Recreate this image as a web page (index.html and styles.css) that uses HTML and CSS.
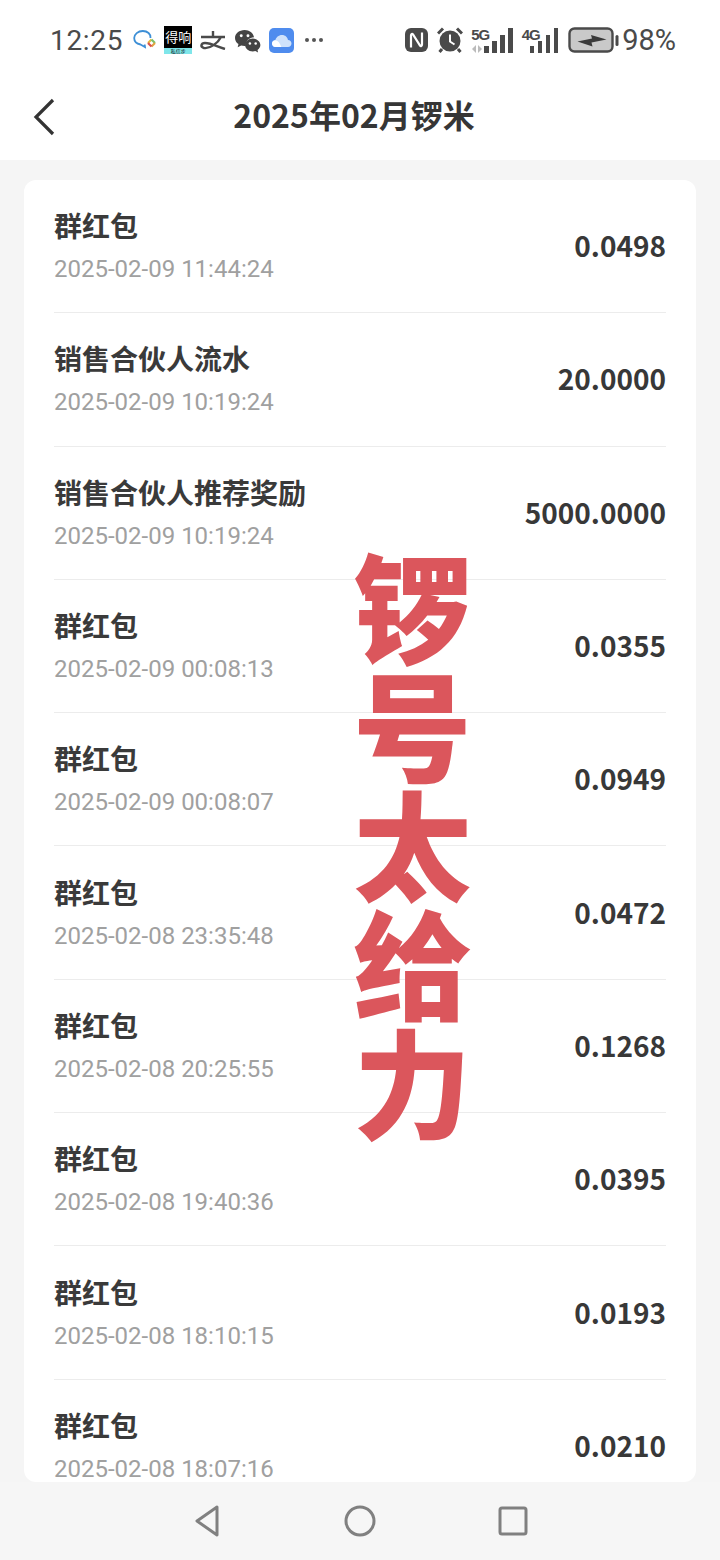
FILE: index.html

```html
<!DOCTYPE html>
<html lang="zh">
<head>
  <meta charset="utf-8">
  <title>2025年02月锣米</title>
  <link rel="stylesheet" href="styles.css">
</head>
<body>
<div class="page">

  <div class="status">
    <span class="clock">12:25</span>
    <div class="app-icons">
      <svg class="ic-chat" viewBox="0 0 23 20" width="23" height="20">
        <path d="M17.500 8C18 4 14.500 1 9.800 1 5 1 1.200 4.200 1.200 8c0 3.300 2.800 5.800 6.300 6.500l4.500 2.500-.3-2.500" fill="none" stroke="#3d8fd6" stroke-width="1.800"/>
        <path d="M15 13l3.500-3.500" stroke="#e8b93a" stroke-width="2.200"/>
        <path d="M18.500 9.500L22 13" stroke="#7cc06a" stroke-width="2.200"/>
        <path d="M22 13l-3.500 3.500" stroke="#e2a13f" stroke-width="2.200"/>
        <path d="M18.500 16.500L15 13" stroke="#d9534f" stroke-width="2.200"/>
      </svg>
      <span class="ic-deyin"><b>得响</b><i>私信步</i></span>
      <svg viewBox="0 0 26 19" width="26" height="19">
        <path d="M13 0v6M1 6h24M21 6c-3 6-11 12-17 11-4-1-3-5 1-5 6 0 13 4 20 6" fill="none" stroke="#4a4a4a" stroke-width="2.400"/>
      </svg>
      <svg viewBox="0 0 28 26" width="27" height="25">
        <path d="M11 2C5.500 2 1 5.700 1 10.300c0 2.600 1.400 4.900 3.600 6.400L3.800 20l3.600-1.800c1.100 .3 2.300 .4 3.600 .4 .4 0 .8 0 1.200 0C12 12.500 16 10 20.800 9.500 20 5.200 16 2 11 2z" fill="#444"/>
        <path d="M19.500 11c-4.500 0-8 3-8 6.700s3.500 6.700 8 6.700c.9 0 1.800-.1 2.700-.4l2.800 1.500-.6-2.600c1.700-1.200 3-3 3-5.200 0-3.700-3.500-6.700-7.900-6.700z" fill="#444"/>
        <circle cx="7.500" cy="8" r="1.500" fill="#fff"/><circle cx="14.500" cy="8" r="1.500" fill="#fff"/>
        <circle cx="16.500" cy="16" r="1.300" fill="#fff"/><circle cx="22.500" cy="16" r="1.300" fill="#fff"/>
      </svg>
      <svg viewBox="0 0 25 25" width="25" height="25">
        <rect width="25" height="25" rx="5" fill="#4f8cee"/>
        <path d="M6.500 19C4 19 3 17 3 15.500S4.300 12.300 6.300 12.300C7 9.500 9.500 7 13 7c3.300 0 5.500 2.300 6 5 2 .2 3.500 1.600 3.500 3.500S21 19 19 19z" fill="#cfe2fb"/>
        <path d="M6.500 19C4 19 3 17 3 15.500S4.300 12.300 6.300 12.300c2.500 0 4.500 2.700 6 6.700z" fill="#fff"/>
      </svg>
      <svg class="ic-dots" viewBox="0 0 20 6" width="20" height="6"><circle cx="3" cy="3" r="2" fill="#555"/><circle cx="10" cy="3" r="2" fill="#555"/><circle cx="17" cy="3" r="2" fill="#555"/></svg>
    </div>
    <div class="sys-icons">
      <svg viewBox="0 0 23 24" width="23" height="24">
        <rect width="23" height="24" rx="6" fill="#4a4a4a"/>
        <path d="M6 19.500V7.500c0-1.500 1.200-2 2-1l7 11c.8 1 2 .5 2-1V4.500" fill="none" stroke="#fff" stroke-width="2.200"/>
      </svg>
      <svg class="ic-alarm" viewBox="0 0 26 26" width="26" height="26">
        <circle cx="13" cy="14" r="10.500" fill="#4a4a4a"/>
        <path d="M13 7.500V14.500l4.500 3" fill="none" stroke="#fff" stroke-width="2"/>
        <path d="M1 6.500L6 1.500M25 6.500L20 1.500M5 22l-2.500 3M21 22l2.500 3" stroke="#4a4a4a" stroke-width="3"/>
      </svg>
      <span class="signal">
        <span class="net"><b>5G</b><svg viewBox="0 0 12 8" width="12" height="8"><path d="M5 0v8L1 4zM7 0v8l4-4z" fill="#bbb"/></svg></span>
        <span class="bars"><i class="b1"></i><i class="b2"></i><i class="b3"></i><i class="b4"></i></span>
      </span>
      <span class="signal signal-4g">
        <span class="net"><b>4G</b></span>
        <span class="bars"><i class="b1"></i><i class="b2"></i><i class="b3"></i><i class="b4"></i></span>
      </span>
      <svg class="ic-batt" viewBox="0 0 52 26" width="52" height="26">
        <rect x="1.500" y="1.500" width="43" height="23" rx="5" fill="#c9c9c9" stroke="#4a4a4a" stroke-width="2.400"/>
        <path d="M9.500 14.500L24 11.500 23 8 38.500 12.500 23.500 15.500 24.500 19.500z" fill="#3a3a3a"/>
        <rect x="47.500" y="8" width="3" height="11" rx="1.500" fill="#4a4a4a"/>
      </svg>
      <span class="pct">98%</span>
    </div>
  </div>

  <div class="topbar">
    <svg class="back" viewBox="0 0 24 38" width="24" height="38"><path d="M21 2L4 19l17 17" fill="none" stroke="#333" stroke-width="3.200"/></svg>
    <h1>2025年02月锣米</h1>
  </div>

  <div class="content">
    <div class="card">
      <div class="row">
        <div><div class="name">群红包</div><div class="time">2025-02-09 11:44:24</div></div>
        <div class="amount">0.0498</div>
      </div>
      <div class="row">
        <div><div class="name">销售合伙人流水</div><div class="time">2025-02-09 10:19:24</div></div>
        <div class="amount">20.0000</div>
      </div>
      <div class="row">
        <div><div class="name">销售合伙人推荐奖励</div><div class="time">2025-02-09 10:19:24</div></div>
        <div class="amount">5000.0000</div>
      </div>
      <div class="row">
        <div><div class="name">群红包</div><div class="time">2025-02-09 00:08:13</div></div>
        <div class="amount">0.0355</div>
      </div>
      <div class="row">
        <div><div class="name">群红包</div><div class="time">2025-02-09 00:08:07</div></div>
        <div class="amount">0.0949</div>
      </div>
      <div class="row">
        <div><div class="name">群红包</div><div class="time">2025-02-08 23:35:48</div></div>
        <div class="amount">0.0472</div>
      </div>
      <div class="row">
        <div><div class="name">群红包</div><div class="time">2025-02-08 20:25:55</div></div>
        <div class="amount">0.1268</div>
      </div>
      <div class="row">
        <div><div class="name">群红包</div><div class="time">2025-02-08 19:40:36</div></div>
        <div class="amount">0.0395</div>
      </div>
      <div class="row">
        <div><div class="name">群红包</div><div class="time">2025-02-08 18:10:15</div></div>
        <div class="amount">0.0193</div>
      </div>
      <div class="row">
        <div><div class="name">群红包</div><div class="time">2025-02-08 18:07:16</div></div>
        <div class="amount">0.0210</div>
      </div>
    </div>
  </div>

  <div class="navbar">
    <svg viewBox="0 0 30 34" width="30" height="34"><path d="M25 3L5 17l20 14z" fill="none" stroke="#808080" stroke-width="3" stroke-linejoin="round"/></svg>
    <svg viewBox="0 0 32 32" width="32" height="32"><circle cx="16" cy="16" r="14" fill="none" stroke="#808080" stroke-width="3"/></svg>
    <svg viewBox="0 0 30 30" width="30" height="30"><rect x="2" y="2" width="26" height="26" rx="2" fill="none" stroke="#808080" stroke-width="3"/></svg>
  </div>

  <!-- sticker over the list -->
  <div class="sticker">锣号太给力</div>

</div>
</body>
</html>
```

FILE: styles.css

```css
* {
    box-sizing: border-box;
}

body {
    margin: 0;
    font-family: "Noto Sans CJK SC", "Noto Sans", sans-serif;
    color: #333;
}

.page {
    position: relative;
    width: 720px;
    height: 1560px;
    display: flex;
    flex-direction: column;
    overflow: hidden;
    background: #f5f5f5;
}

/* status bar */
.status {
    height: 80px;
    flex: none;
    padding: 0 44px 0 50px;
    display: flex;
    align-items: center;
    background: #fff;
    color: #4a4a4a;
}

.clock {
    font-family: Roboto, sans-serif;
    font-size: 28px;
    letter-spacing: 0.7px;
}

.app-icons {
    display: flex;
    align-items: center;
    gap: 8px;
    margin-left: 10px;
}

.ic-deyin {
    width: 28px;
    height: 28px;
    display: flex;
    flex-direction: column;
    align-items: center;
    background: #000;
    overflow: hidden;
}

.ic-deyin b {
    height: 22px;
    font-size: 13px;
    line-height: 22px;
    font-weight: 400;
    color: #fff;
}

.ic-deyin i {
    width: 100%;
    height: 6px;
    font-size: 5px;
    line-height: 6px;
    font-style: normal;
    text-align: center;
    color: #111;
    background: #7fe6ea;
}

.ic-dots {
    margin-left: 2px;
}

.sys-icons {
    display: flex;
    align-items: center;
    margin-left: auto;
}

.ic-alarm {
    margin-left: 9px;
}

.signal {
    display: flex;
    align-items: flex-end;
    height: 26px;
    margin-left: 8px;
}

.signal-4g {
    margin-left: 9px;
}

.signal-4g .bars {
    margin-left: -10px;
}

.net {
    display: flex;
    flex-direction: column;
    width: 18px;
    height: 26px;
    font-family: "Liberation Sans", sans-serif;
}

.net b {
    font-size: 15px;
    line-height: 15px;
    letter-spacing: -1px;
    color: #4a4a4a;
}

.net svg {
    margin-top: 3px;
}

.bars {
    display: flex;
    align-items: flex-end;
    gap: 3.5px;
    margin-left: -5px;
}

.bars i {
    display: block;
    width: 4.5px;
    background: #4a4a4a;
}

.bars .b1 { height: 7px; }
.bars .b2 { height: 12px; }
.bars .b3 { height: 18px; }
.bars .b4 { height: 25px; }

.ic-batt {
    margin-left: 10px;
}

.pct {
    font-family: Roboto, sans-serif;
    font-size: 29px;
    margin-left: 2px;
}

/* title bar */
.topbar {
    height: 80px;
    flex: none;
    position: relative;
    display: flex;
    justify-content: center;
    padding-right: 12px;
    background: #fff;
}

.topbar h1 {
    margin: 0;
    font-size: 32px;
    line-height: 68px;
    font-weight: 700;
    color: #363636;
}

.back {
    position: absolute;
    left: 32px;
    top: 18px;
}

/* list */
.content {
    flex: 1;
    min-height: 0;
    padding: 20px 24px 0;
}

.card {
    height: 100%;
    padding: 0 30px;
    overflow: hidden;
    background: #fff;
    border-radius: 12px;
}

.row {
    height: 133.3px;
    display: flex;
    align-items: center;
    justify-content: space-between;
    border-bottom: 1px solid #ececec;
}

.name {
    font-size: 28px;
    line-height: 40px;
    font-weight: 700;
    color: #3a3a3a;
}

.time {
    margin-top: 10px;
    margin-bottom: 4px;
    font-family: Roboto, sans-serif;
    font-size: 24px;
    line-height: 28px;
    color: #a0a0a0;
}

.amount {
    padding-bottom: 2px;
    font-size: 28px;
    font-weight: 700;
    color: #383838;
}

/* bottom nav */
.navbar {
    height: 78px;
    flex: none;
    display: flex;
    align-items: center;
    justify-content: center;
    gap: 122px;
    background: #f6f6f6;
}

/* big red text */
.sticker {
    position: absolute;
    left: 352px;
    top: 550px;
    width: 120px;
    writing-mode: vertical-rl;
    font-size: 118px;
    line-height: 120px;
    letter-spacing: 1px;
    font-weight: 900;
    color: #db565c;
}
```
